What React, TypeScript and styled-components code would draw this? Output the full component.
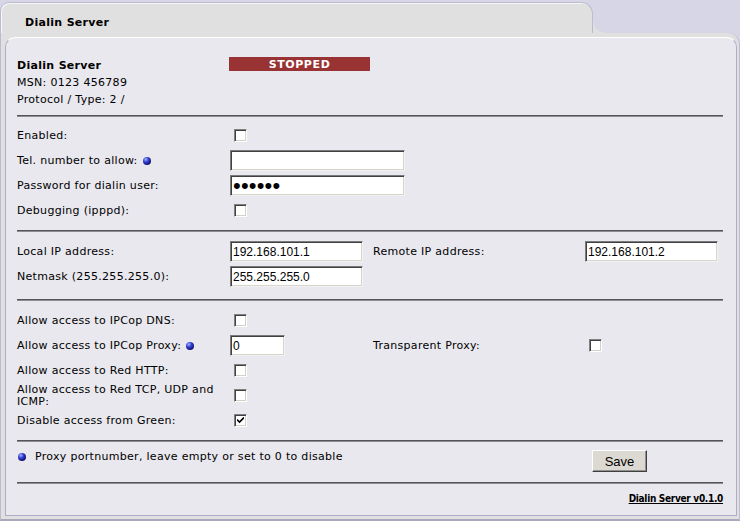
import styled, { createGlobalStyle } from 'styled-components'

const GlobalStyle = createGlobalStyle`
  html, body {
    margin: 0;
    padding: 0;
    background-color: #d6d6e6;
  }

  body {
    font-family: "DejaVu Sans", Verdana, sans-serif;
    font-size: 11px;
    letter-spacing: 0.3px;
    color: #000;
  }
`

const Page = styled.div`
  min-height: 521px;
  height: 100vh;
  box-sizing: border-box;
  padding-top: 2px;
  display: flex;
  flex-direction: column;
`

const Tab = styled.div`
  position: relative;
  width: 593px;
  height: 31px;
  box-sizing: border-box;
  background-color: #e0e0e0;
  border: 1px solid #bdbccf;
  border-bottom: none;
  border-radius: 9px 12px 0 0;
  box-shadow: inset 1px 1px 0 #f6f6f6;

  /* concave join between the tab and the body */
  &::after {
    content: '';
    position: absolute;
    right: -13px;
    bottom: 0;
    width: 12px;
    height: 12px;
    background: radial-gradient(circle at 100% 0, transparent 11px, #e0e0e0 12px);
  }

  .title {
    padding: 13px 0 0 24px;
    font-weight: bold;
    line-height: 14px;
  }
`

const Body = styled.div`
  flex: 1;
  display: flex;
  background-color: #e0e0e0;
  border: 1px solid #bdbccf;
  border-top: none;
  border-bottom: 2px solid #a9a8bd;
  border-radius: 0 12px 0 0;
  padding: 4px 2px 3px 4px;
`

const Panel = styled.div`
  flex: 1;
  background-color: #e9e8ee;
  border: 1px solid #aeacc8;
  border-top-color: #ffffff;
  border-radius: 10px 10px 0 0;
  padding: 19px 13px 0 11px;
`

const Section = styled.div<{ $top?: number; $bottom?: number }>`
  padding-top: ${p => p.$top ?? 0}px;
  padding-bottom: ${p => p.$bottom ?? 0}px;
`

const Divider = styled.div`
  height: 1px;
  background-color: #555555;
  border-bottom: 1px solid #8c8c96;
`

const FormGrid = styled.div<{ $row?: number }>`
  display: grid;
  grid-template-columns: 213px 143px 212px 1fr;
  grid-auto-rows: ${p => p.$row ?? 25}px;
  align-items: center;
`

const StatusGrid = styled.div`
  display: grid;
  grid-template-columns: 212px 1fr;
  grid-auto-rows: 17px;
  line-height: 18px;

  .name {
    font-weight: bold;
  }
`

const StatusBar = styled.div`
  width: 141px;
  height: 14px;
  background-color: #993333;
  color: #fff;
  font-weight: bold;
  text-align: center;
  line-height: 15px;
  letter-spacing: 0.6px;
`

const Label = styled.div`
  line-height: 12px;
  display: flex;
  align-items: center;
  gap: 5px;
  padding-top: 1px;
`

const Cell = styled.div`
  display: flex;
  align-items: center;
`

const Dot = styled.span`
  display: inline-block;
  flex: none;
  width: 8px;
  height: 8px;
  border-radius: 50%;
  background: radial-gradient(circle at 35% 30%, #a8b4ff 0, #3340d0 35%, #12147a 70%, #05053a 100%);
`

const Box = styled.span<{ $checked?: boolean }>`
  display: inline-flex;
  align-items: center;
  justify-content: center;
  width: 13px;
  height: 13px;
  box-sizing: border-box;
  margin-left: 4px;
  background-color: #fff;
  border: 1px solid;
  border-color: #808080 #ffffff #ffffff #808080;
  box-shadow: inset 1px 1px 0 #404040, inset -1px -1px 0 #d4d0c8;
`

const TextInput = styled.input<{ $w: number }>`
  width: ${p => p.$w}px;
  height: 21px;
  box-sizing: border-box;
  margin: 0;
  padding: 0 0 0 2px;
  background-color: #fff;
  border: 1px solid;
  border-color: #7b7b7b #f2f2f2 #f2f2f2 #7b7b7b;
  box-shadow: inset 1px 1px 0 #404040, inset -1px -1px 0 #d8d4cc;
  font-family: "Liberation Sans", Arial, sans-serif;
  font-size: 12px;
  letter-spacing: 0;
  color: #000;
  outline: none;

  &[type='password'] {
    font-size: 22px;
    letter-spacing: 0.2px;
  }
`

const HintRow = styled.div`
  display: grid;
  grid-template-columns: 575px 1fr;
  align-items: start;

  .hint {
    display: flex;
    align-items: center;
    gap: 9px;
    line-height: 14px;
    padding-left: 1px;
  }
`

const Button = styled.button`
  width: 55px;
  height: 22px;
  margin: 0;
  padding: 0;
  background-color: #dcd9d2;
  border: 1px solid;
  border-color: #ffffff #404040 #404040 #ffffff;
  box-shadow: inset -1px -1px 0 #909090;
  font-family: "Liberation Sans", Arial, sans-serif;
  font-size: 13px;
  color: #000;
`

const Footer = styled.div`
  text-align: right;
  line-height: 14px;

  a {
    font-family: "DejaVu Sans Condensed", "DejaVu Sans", sans-serif;
    font-size: 10px;
    font-weight: bold;
    letter-spacing: -0.3px;
    color: #000;
  }
`

const Check = ({ checked = false }: { checked?: boolean }) => (
  <Box $checked={checked}>
    {checked && (
      <svg width="7" height="7" viewBox="0 0 7 7">
        <path d="M0 2.5 L2.5 5 L7 0.5" fill="none" stroke="#000" strokeWidth="1.6" />
      </svg>
    )}
  </Box>
)

const App = () => {
  return (
    <Page>
      <GlobalStyle />
      <Tab>
        <div className="title">Dialin Server</div>
      </Tab>
      <Body>
        <Panel>
          <Section $bottom={7}>
            <StatusGrid>
              <div className="name">Dialin Server</div>
              <StatusBar>STOPPED</StatusBar>
              <div>MSN: 0123 456789</div>
              <div />
              <div>Protocol / Type: 2 /</div>
            </StatusGrid>
          </Section>
          <Divider />

          <Section $top={6} $bottom={7}>
            <FormGrid>
              <Label>Enabled:</Label>
              <Cell><Check /></Cell>
              <div />
              <div />

              <Label>Tel. number to allow: <Dot /></Label>
              <Cell style={{ gridColumn: 'span 3' }}><TextInput $w={175} defaultValue="" /></Cell>

              <Label>Password for dialin user:</Label>
              <Cell style={{ gridColumn: 'span 3' }}><TextInput $w={175} type="password" defaultValue="secret" /></Cell>

              <Label>Debugging (ipppd):</Label>
              <Cell><Check /></Cell>
            </FormGrid>
          </Section>
          <Divider />

          <Section $top={7} $bottom={10}>
            <FormGrid>
              <Label>Local IP address:</Label>
              <Cell><TextInput $w={133} defaultValue="192.168.101.1" /></Cell>
              <Label>Remote IP address:</Label>
              <Cell><TextInput $w={133} defaultValue="192.168.101.2" /></Cell>

              <Label>Netmask (255.255.255.0):</Label>
              <Cell><TextInput $w={133} defaultValue="255.255.255.0" /></Cell>
            </FormGrid>
          </Section>
          <Divider />

          <Section $top={7} $bottom={7}>
            <FormGrid>
              <Label>Allow access to IPCop DNS:</Label>
              <Cell><Check /></Cell>
              <div />
              <div />

              <Label>Allow access to IPCop Proxy: <Dot /></Label>
              <Cell><TextInput $w={55} defaultValue="0" /></Cell>
              <Label>Transparent Proxy:</Label>
              <Cell><Check /></Cell>

              <Label>Allow access to Red HTTP:</Label>
              <Cell><Check /></Cell>
              <div />
              <div />

              <Label>Allow access to Red TCP, UDP and ICMP:</Label>
              <Cell><Check /></Cell>
              <div />
              <div />

              <Label>Disable access from Green:</Label>
              <Cell><Check checked /></Cell>
            </FormGrid>
          </Section>
          <Divider />

          <Section $top={8} $bottom={10}>
            <HintRow>
              <div className="hint">
                <Dot />
                Proxy portnumber, leave empty or set to 0 to disable
              </div>
              <Button>Save</Button>
            </HintRow>
          </Section>
          <Divider />

          <Section $top={8}>
            <Footer>
              <a href="#">Dialin Server v0.1.0</a>
            </Footer>
          </Section>
        </Panel>
      </Body>
    </Page>
  )
}

export default App
